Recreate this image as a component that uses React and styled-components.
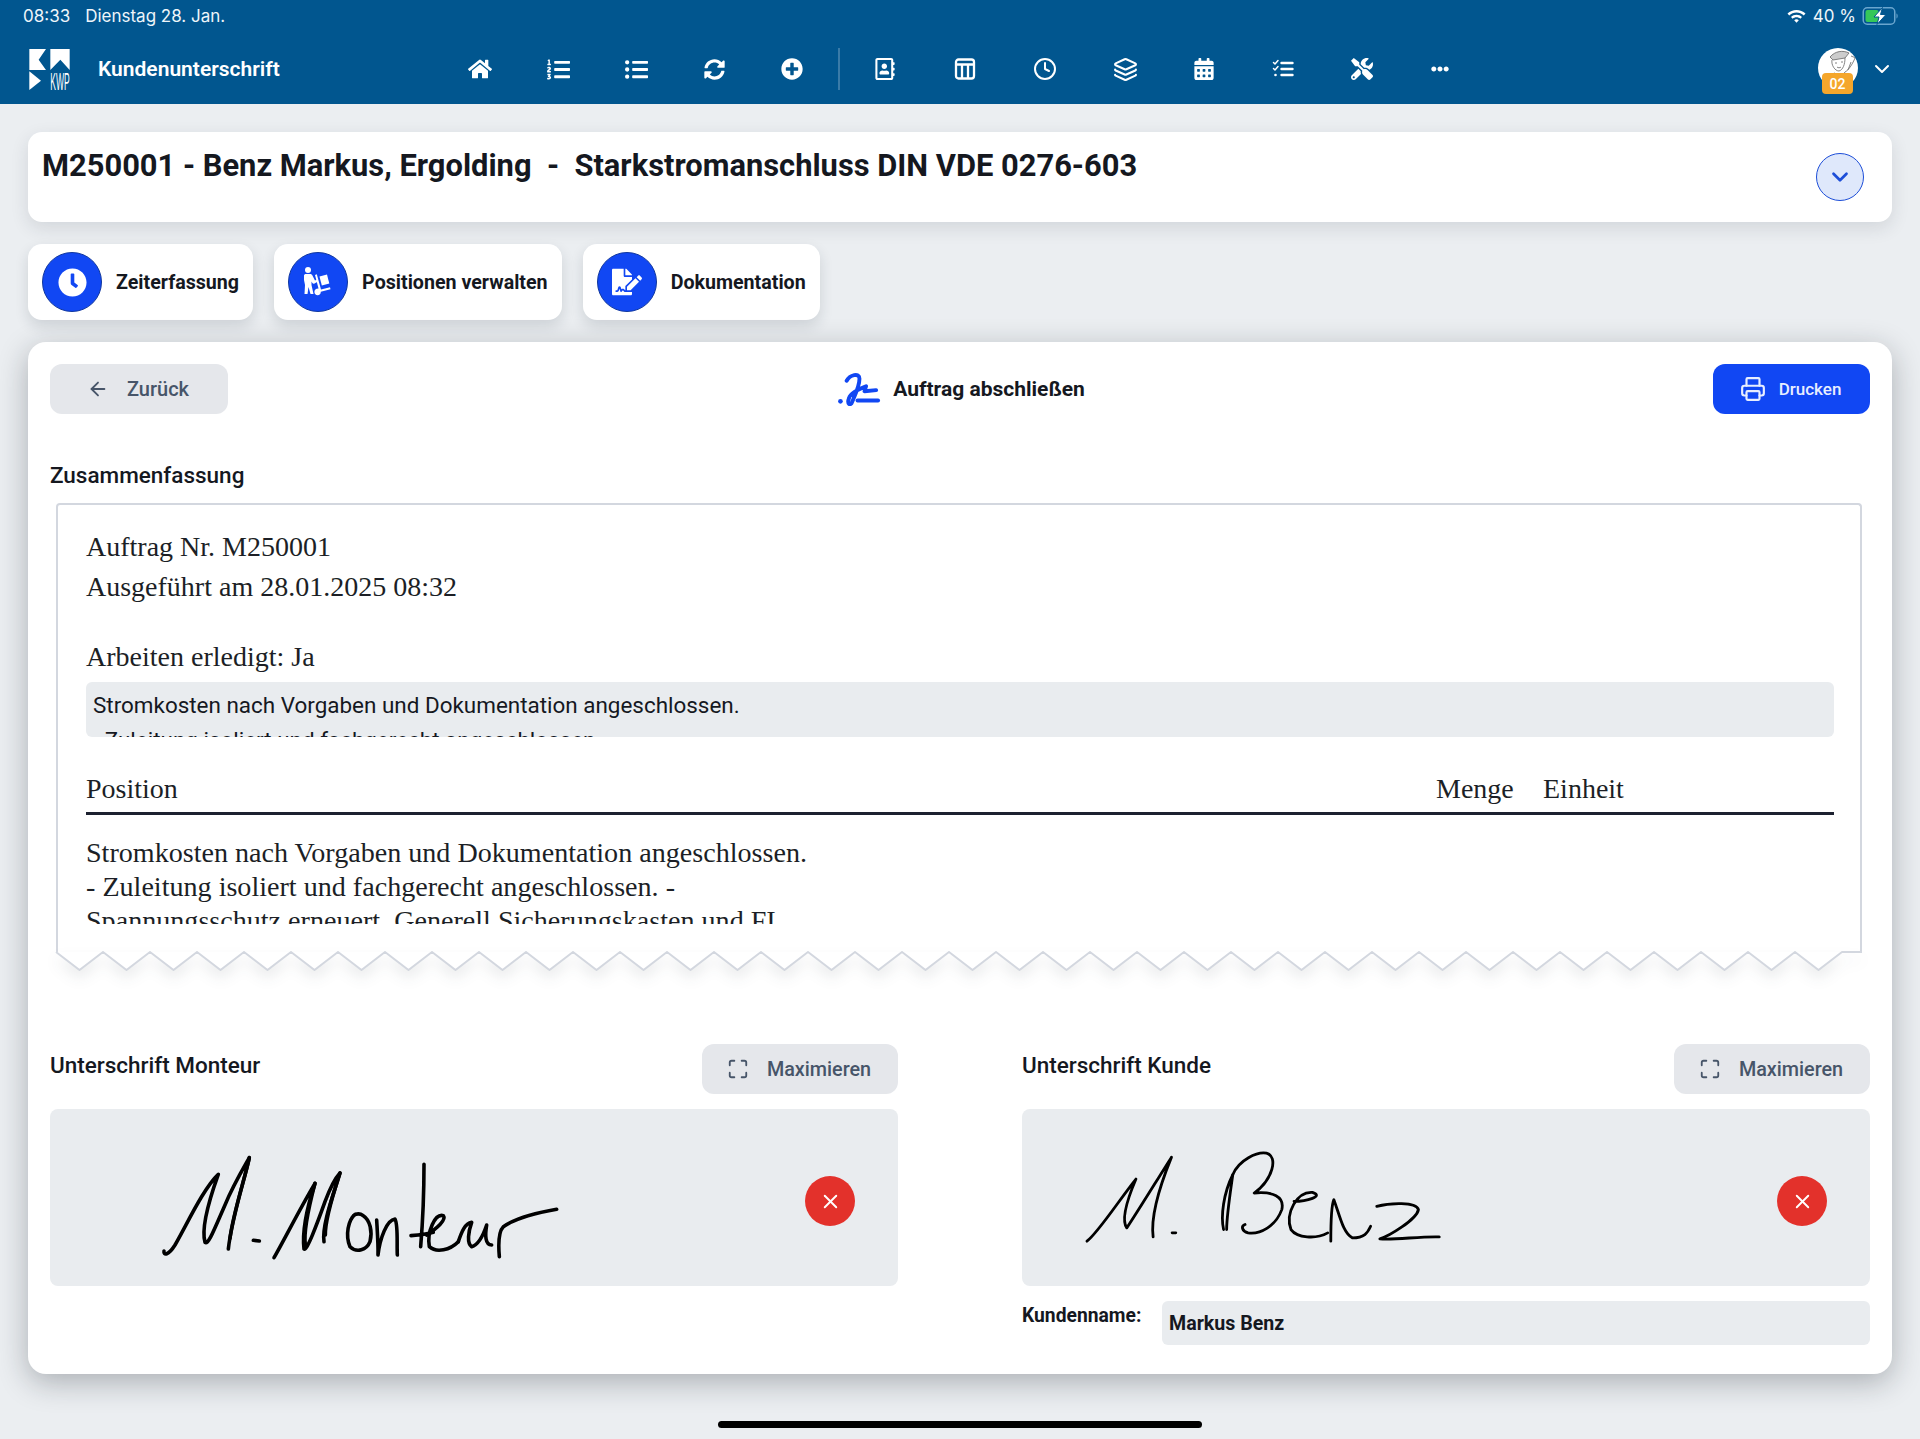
import React from "react";
import styled, { createGlobalStyle } from "styled-components";
import { FaHome, FaListOl, FaListUl, FaSyncAlt, FaPlusCircle, FaRegAddressBook, FaCalendarAlt, FaTools, FaEllipsisH, FaClock, FaFileSignature } from "react-icons/fa";
import { ChevronDown, Clock, Layers, Printer, ArrowLeft, Maximize, X } from "lucide-react";

const Global = createGlobalStyle`
  html, body { margin: 0; padding: 0; background: #ebeef1; }
  body { font-family: Roboto, "Liberation Sans", sans-serif; color: #15181f; }
  * { box-sizing: border-box; }
`;

const Page = styled.div`
  position: relative;
  width: 1920px;
  height: 1439px;
  overflow: hidden;
  background: #ebeef1;
`;

const Header = styled.header`
  height: 104px;
  background: #01568f;
  color: #fff;
  padding: 0 20px 0 23px;
`;

const StatusBar = styled.div`
  height: 32px;
  display: flex;
  align-items: center;
  justify-content: space-between;
  font-family: Inter, Roboto, sans-serif;
  font-size: 17px;
  color: #eef5fa;
`;

const StatusGroup = styled.div`
  display: flex;
  align-items: center;
  gap: ${(p) => p.$gap}px;
`;

const Nav = styled.nav`
  height: 72px;
  display: flex;
  align-items: center;
  padding-right: 6px;
`;

const LogoBox = styled.div`
  width: 75px;
  display: flex;
  padding: 0 0 0 6px;
  margin-top: 2px;
`;

const NavTitle = styled.div`
  width: 343px;
  font-size: 21px;
  font-weight: 600;
  margin-top: 1px;
`;

const NavSlot = styled.div`
  width: ${(p) => p.$w}px;
  display: flex;
  justify-content: center;
  align-items: center;
  margin-top: 2px;
  color: #fff;
`;

const NavDivider = styled.div`
  width: 2px;
  height: 42px;
  margin: 2px 5px 0 7px;
  background: #3a7ba8;
`;

const UserArea = styled.div`
  margin-left: auto;
  display: flex;
  align-items: center;
  gap: 12px;
  margin-top: 2px;
`;

const AvatarWrap = styled.div`
  position: relative;
  width: 40px;
  height: 40px;
  margin-top: -2px;
`;

const Avatar = styled.div`
  width: 40px;
  height: 40px;
  border-radius: 50%;
  background: #fff;
  overflow: hidden;
`;

const Badge = styled.div`
  position: absolute;
  left: 4px;
  top: 25px;
  width: 31px;
  height: 21px;
  border-radius: 4px;
  background: #f5a62b;
  color: #fff;
  font-size: 14px;
  font-weight: 500;
  display: flex;
  align-items: center;
  justify-content: center;
`;

const Content = styled.main`
  padding: 28px 28px 0;
  display: flex;
  flex-direction: column;
  gap: 22px;
`;

const TitleCard = styled.section`
  height: 90px;
  background: #fff;
  border-radius: 14px;
  padding: 13px 28px 0 14px;
  display: flex;
  justify-content: space-between;
  box-shadow: 0 6px 18px rgba(30, 40, 60, 0.12);
`;

const OrderTitle = styled.h1`
  margin: 0;
  font-size: 30.86px;
  line-height: 42px;
  font-weight: 700;
  white-space: pre;
  color: #15181f;
`;

const ExpandBtn = styled.button`
  width: 48px;
  height: 48px;
  margin-top: 8px;
  padding: 0;
  border-radius: 50%;
  border: 1.5px solid #1d4ed8;
  background: #dfe8fb;
  color: #1d4ed8;
  display: flex;
  align-items: center;
  justify-content: center;
`;

const Tabs = styled.div`
  display: flex;
  gap: 21px;
`;

const Tab = styled.div`
  height: 76px;
  background: #fff;
  border-radius: 14px;
  padding: 0 14px;
  display: flex;
  align-items: center;
  gap: 14px;
  font-size: 19.65px;
  font-weight: 700;
  box-shadow: 0 6px 14px rgba(30, 40, 60, 0.14);
`;

const TabIcon = styled.div`
  width: 60px;
  height: 60px;
  border-radius: 50%;
  background: #1147f3;
  border: 1px solid #10379f;
  color: #fff;
  display: flex;
  align-items: center;
  justify-content: center;
`;

const MainCard = styled.section`
  height: 1032px;
  background: #fff;
  border-radius: 18px;
  padding: 22px;
  box-shadow: 0 8px 30px rgba(20, 25, 35, 0.3);
`;

const Toolbar = styled.div`
  display: grid;
  grid-template-columns: 1fr auto 1fr;
  align-items: center;
  height: 50px;
`;

const GrayButton = styled.button`
  height: 50px;
  width: ${(p) => p.$w}px;
  padding: 0 2px 0 0;
  border: none;
  border-radius: 12px;
  background: #e5e7eb;
  color: #475569;
  font-family: inherit;
  font-size: ${(p) => p.$size}px;
  font-weight: 500;
  display: flex;
  align-items: center;
  justify-content: center;
  gap: ${(p) => p.$gap}px;
`;

const CenterTitle = styled.div`
  display: flex;
  align-items: center;
  gap: 11px;
  font-size: 21px;
  font-weight: 700;
`;

const PrintButton = styled.button`
  justify-self: end;
  width: 157px;
  height: 50px;
  padding: 0 2px 0 0;
  border: none;
  border-radius: 12px;
  background: #1147f3;
  color: #e8eeff;
  font-family: inherit;
  font-size: 17px;
  font-weight: 500;
  display: flex;
  align-items: center;
  justify-content: center;
  gap: 13px;
`;

const SectionLabel = styled.h2`
  margin: 0;
  font-size: 22.5px;
  line-height: 26px;
  font-weight: 500;
  padding-top: ${(p) => p.$top || 0}px;
`;

const SummaryBlock = styled.div`
  margin-top: 48px;
`;

const Paper = styled.div`
  margin: 15px 8px 0 6px;
  height: 449px;
  border: 2px solid #d3d7df;
  border-bottom: none;
  border-radius: 4px 4px 0 0;
  padding: 22px 26px 0 28px;
  background: #fff;
  font-family: "Liberation Serif", "Times New Roman", serif;
  font-size: 28px;
  color: #1c1f26;
`;

const PaperLine = styled.div`
  line-height: 40px;
  margin-top: ${(p) => p.$top || 0}px;
`;

const Notes = styled.div`
  height: 55px;
  margin-top: 5px;
  overflow: hidden;
  padding: 6px 7px 0;
  border-radius: 6px;
  background: #e9ecef;
  font-family: Roboto, sans-serif;
  font-size: 22.45px;
  line-height: 35px;
  color: #15181f;
`;

const TableHead = styled.div`
  margin-top: 32px;
  display: grid;
  grid-template-columns: 1350px 107px 1fr;
  line-height: 40px;
  padding-bottom: 3px;
  border-bottom: 3px solid #1c2130;
`;

const RowText = styled.div`
  margin-top: 21px;
  height: 88px;
  overflow: hidden;
  font-size: 28.1px;
  line-height: 34px;
`;

const ZigzagSvg = styled.svg`
  display: block;
  margin: 0 8px 0 6px;
  width: calc(100% - 14px);
  height: 20px;
  overflow: visible;
  filter: drop-shadow(0 8px 7px rgba(30, 40, 60, 0.09));
`;

const SignatureGrid = styled.div`
  margin-top: 72px;
  display: grid;
  grid-template-columns: 848px 848px;
  column-gap: 124px;
`;

const SignatureHead = styled.div`
  display: flex;
  justify-content: space-between;
  height: 50px;
`;

const SignatureBox = styled.div`
  position: relative;
  margin-top: 15px;
  height: 177px;
  border-radius: 8px;
  background: #e9ecef;
  overflow: hidden;
`;

const SignatureSvg = styled.svg`
  display: block;
  width: 100%;
  height: 100%;
  path {
    fill: none;
    stroke: #000;
    stroke-linecap: round;
    stroke-linejoin: round;
    vector-effect: non-scaling-stroke;
    stroke-width: ${(p) => p.$sw}px;
  }
`;

const ClearButton = styled.button`
  position: absolute;
  right: 43px;
  top: 67px;
  width: 50px;
  height: 50px;
  padding: 0;
  border: none;
  border-radius: 50%;
  background: #e3312b;
  color: #fff;
  display: flex;
  align-items: center;
  justify-content: center;
`;

const NameRow = styled.div`
  margin-top: 15px;
  display: flex;
`;

const NameLabel = styled.label`
  width: 140px;
  padding-top: 1px;
  font-size: 19.3px;
  line-height: 28px;
  font-weight: 700;
`;

const NameInput = styled.input`
  flex: 1;
  height: 44px;
  border: none;
  border-radius: 6px;
  padding: 0 7px;
  background: #e9ecef;
  font-family: inherit;
  font-size: 19.6px;
  font-weight: 700;
  color: #15181f;
`;

const HomeBar = styled.div`
  position: absolute;
  left: 718px;
  top: 1421px;
  width: 484px;
  height: 7px;
  border-radius: 4px;
  background: #000;
`;

const Logo = () => (
  <svg width="41" height="41" viewBox="0 0 121 123">
    <path fill="#fff" d="M0 0H50L28 32L50 63H0Z" />
    <path fill="#fff" d="M63 0H121V63L93 32L63 63Z" />
    <path fill="#fff" d="M0 67L35 95L0 123Z" />
    <text x="63" y="122" fill="#fff" fontFamily="Liberation Sans, sans-serif" fontSize="74" textLength="58" lengthAdjust="spacingAndGlyphs">KWP</text>
  </svg>
);

const Wifi = () => (
  <svg width="21" height="16" viewBox="0 0 20 16" fill="#fff">
    <path d="M10 2C6.6 2 3.5 3.3 1 5.6l1.7 1.8C4.7 5.6 7.2 4.5 10 4.5s5.3 1.1 7.3 2.9L19 5.600C16.500 3.300 13.400 2 10 2Z" />
    <path d="M10 6.800c-2.100 0-4 .8-5.500 2.200l1.700 1.800c1-1 2.300-1.500 3.800-1.500s2.800.5 3.800 1.500L15.500 9c-1.500-1.400-3.400-2.200-5.500-2.200Z" />
    <path d="M10 11.300c-.9 0-1.700.4-2.300.9L10 14.700l2.300-2.500c-.6-.5-1.400-.9-2.300-.9Z" />
  </svg>
);

const Battery = () => (
  <svg width="38" height="18" viewBox="0 0 37 18">
    <rect x="0.750" y="0.750" width="31.500" height="16.500" rx="4" fill="none" stroke="#6aa6cf" strokeWidth="1.500" />
    <rect x="3" y="3" width="13" height="12" rx="2" fill="#35c75a" />
    <path d="M34 6.500c1.500.5 1.500 4.500 0 5Z" fill="#6aa6cf" />
    <path d="M20 0.500L11.500 10h5l-2 7.500L23.500 7.500h-5.500Z" fill="#fff" stroke="#01568f" strokeWidth="1" />
  </svg>
);

const ColumnsIcon = () => (
  <svg width="24" height="24" viewBox="0 0 24 24" fill="none" stroke="#fff" strokeWidth="2.300" strokeLinejoin="round">
    <rect x="3" y="2.500" width="18" height="19" rx="2.500" />
    <path d="M3 7.500H21M9 7.500V21.500M15 7.500V21.500" />
  </svg>
);

const ChecklistIcon = () => (
  <svg width="24" height="24" viewBox="0 0 24 24" fill="none" stroke="#fff" strokeWidth="2" strokeLinecap="round" strokeLinejoin="round">
    <path d="M2.500 5.500l1.500 1.500 3-3.500M2.500 11.500l1.500 1.500 3-3.500" strokeWidth="1.500" />
    <path d="M10.500 6H21.500M10.500 12H21.500M10.500 18H21.500" strokeWidth="2.400" />
    <circle cx="4.500" cy="18" r="1.300" fill="#fff" stroke="none" />
  </svg>
);

const SignIcon = () => (
  <svg width="47" height="33" viewBox="0 0 105 85" fill="none" stroke="#1147f3" strokeWidth="10" strokeLinecap="round" strokeLinejoin="round">
    <circle cx="6" cy="73" r="6" fill="#1147f3" stroke="none" />
    <path d="M22 20C30 5 55-2 55 15C55 35 42 60 36 75C32 86 22 80 28 65C32 50 55 42 72 34L68 47L98 44" />
    <path d="M50 71H103" />
  </svg>
);

const PersonDolly = () => (
  <svg width="34" height="34" viewBox="0 0 34 34" fill="#fff">
    <circle cx="7" cy="5" r="3" />
    <path d="M3 10.500C3 9.500 4 9 5 9H9C10 9 10.800 9.500 11.300 10.300L14 15.500L16 14.500L17 16.500L13.500 18.500C12.700 19 11.800 18.700 11.400 18L10.500 16.500V20L12.500 29H9.500L7.500 22L6.500 29H3.500L4 20L3 15Z" />
    <path d="M14 10L15.800 9.200L20 24.500L29 22.300L29.500 24.200L19.800 26.700C19.900 28.700 18.500 30.200 16.700 30.200C14.800 30.200 13.400 28.700 13.400 26.900C13.400 25.500 14.300 24.300 15.600 23.800L17.500 23.500Z" />
    <path d="M18.500 11.500L26 9.500L28.300 18.500L20.800 20.500Z" />
  </svg>
);

const AvatarDrawing = () => (
  <svg width="40" height="40" viewBox="0 0 40 40" fill="none" stroke="#666" strokeWidth="0.800">
    <path d="M12 9C17 3 25 2 31 5L27 10L15 12Z" fill="#ccc" />
    <path d="M14 12C13 17 17 23 21 23C25 22 27 16 27 10" />
    <path d="M17 15h2M23 14h2M19 19c1 1 3 1 4 0" />
    <path d="M6 36C8 30 13 26 17 25L21 31L27 24C31 22 35 15 37 10" />
    <path d="M33 8l5 2M14 26l-3 10M24 27l2 9M30 22l3-8" />
  </svg>
);

const monteurPaths = [
  "M42 318C40 332 55 332 75 300C110 240 160 130 205 88C190 130 150 240 165 292C175 300 190 260 225 180C250 120 280 70 298 38C285 100 245 220 235 312",
  "M298 38C285 100 250 200 240 280",
  "M310 286L328 288",
  "M372 338C400 290 450 190 495 115C480 160 455 250 462 312C470 320 500 240 525 170C540 130 555 100 570 84C550 150 515 240 522 290",
  "M495 115C478 180 460 260 466 300M570 84C552 140 525 220 526 270",
  "M615 208C595 225 585 270 600 305C620 325 650 315 660 290C668 260 660 225 640 212C630 205 620 205 610 212",
  "M680 225C682 260 685 300 684 330C690 280 710 225 735 222C745 240 740 300 742 330",
  "M822 58C822 120 820 210 812 305M783 272C810 270 830 268 850 262",
  "M830 270C860 250 890 225 880 212C855 205 830 260 838 305C860 325 900 315 925 290",
  "M925 290C935 260 945 235 965 232C955 260 950 295 965 305C985 300 1000 270 1010 240C1005 270 1005 300 1025 300",
  "M1048 335C1045 300 1045 260 1060 245C1090 225 1150 205 1220 193",
];

const benzPaths = [
  "M207 665C225 640 260 540 287 478C275 530 262 600 272 625C285 590 325 470 345 412C330 480 310 580 315 652",
  "M346 640L352 640",
  "M430 630C425 590 430 520 445 465C440 530 435 590 435 630",
  "M445 465C455 420 485 395 500 400C520 410 510 480 480 520C510 515 530 530 525 570C515 620 490 645 470 640C460 635 458 620 465 615",
  "M545 545C565 545 595 530 575 518C550 515 530 580 540 630C550 655 580 660 600 640",
  "M605 665C605 620 605 560 610 540C620 590 625 640 640 655C660 655 665 640 670 620",
  "M680 560C700 550 745 545 748 570C745 600 700 650 685 658C710 662 750 650 782 652",
];

const zigzag = (() => {
  const period = 47;
  const width = 1806;
  let d = "M0 0";
  for (let x = period / 2, low = true; x < width; x += period / 2, low = !low) {
    d += `L${x} ${low ? 18 : 0}`;
  }
  return d + `L${width} 0`;
})();

const navGroupA = [
  [FaHome, 24],
  [FaListOl, 23],
  [FaListUl, 23],
  [FaSyncAlt, 21],
  [FaPlusCircle, 22],
];

const Signature = ({ paths, viewBox, sw }) => (
  <SignatureSvg viewBox={viewBox} preserveAspectRatio="none" $sw={sw}>
    {paths.map((d) => (
      <path key={d} d={d} />
    ))}
  </SignatureSvg>
);

export default function App() {
  return (
    <Page>
      <Global />
      <Header>
        <StatusBar>
          <StatusGroup $gap={15}>
            <span>08:33</span>
            <span>Dienstag 28. Jan.</span>
          </StatusGroup>
          <StatusGroup $gap={6}>
            <Wifi />
            <span>40 %</span>
            <Battery />
          </StatusGroup>
        </StatusBar>
        <Nav>
          <LogoBox>
            <Logo />
          </LogoBox>
          <NavTitle>Kundenunterschrift</NavTitle>
          {navGroupA.map(([Icon, size], i) => (
            <NavSlot key={i} $w={78}>
              <Icon size={size} />
            </NavSlot>
          ))}
          <NavDivider />
          <NavSlot $w={80}><FaRegAddressBook size={22} /></NavSlot>
          <NavSlot $w={80}><ColumnsIcon /></NavSlot>
          <NavSlot $w={80}><Clock size={24} strokeWidth={2} /></NavSlot>
          <NavSlot $w={80}><Layers size={25} strokeWidth={2} /></NavSlot>
          <NavSlot $w={78}><FaCalendarAlt size={22} /></NavSlot>
          <NavSlot $w={80}><ChecklistIcon /></NavSlot>
          <NavSlot $w={78}><FaTools size={22} /></NavSlot>
          <NavSlot $w={78}><FaEllipsisH size={18} /></NavSlot>
          <UserArea>
            <AvatarWrap>
              <Avatar><AvatarDrawing /></Avatar>
              <Badge>02</Badge>
            </AvatarWrap>
            <ChevronDown size={24} strokeWidth={2} />
          </UserArea>
        </Nav>
      </Header>
      <Content>
        <TitleCard>
          <OrderTitle>{"M250001 - Benz Markus, Ergolding  -  Starkstromanschluss DIN VDE 0276-603"}</OrderTitle>
          <ExpandBtn aria-label="Details"><ChevronDown size={26} strokeWidth={2.500} /></ExpandBtn>
        </TitleCard>
        <Tabs>
          <Tab><TabIcon><FaClock size={29} /></TabIcon>Zeiterfassung</Tab>
          <Tab><TabIcon><PersonDolly /></TabIcon>Positionen verwalten</Tab>
          <Tab><TabIcon><FaFileSignature size={30} /></TabIcon>Dokumentation</Tab>
        </Tabs>
        <MainCard>
          <Toolbar>
            <GrayButton $w={178} $gap={18} $size={20}><ArrowLeft size={22} />Zurück</GrayButton>
            <CenterTitle><SignIcon />Auftrag abschließen</CenterTitle>
            <PrintButton><Printer size={26} />Drucken</PrintButton>
          </Toolbar>
          <SummaryBlock>
            <SectionLabel>Zusammenfassung</SectionLabel>
            <Paper>
              <PaperLine>Auftrag Nr. M250001</PaperLine>
              <PaperLine>Ausgeführt am 28.01.2025 08:32</PaperLine>
              <PaperLine $top={30}>Arbeiten erledigt: Ja</PaperLine>
              <Notes>
                <div>Stromkosten nach Vorgaben und Dokumentation angeschlossen.</div>
                <div>- Zuleitung isoliert und fachgerecht angeschlossen.</div>
              </Notes>
              <TableHead>
                <span>Position</span>
                <span>Menge</span>
                <span>Einheit</span>
              </TableHead>
              <RowText>
                Stromkosten nach Vorgaben und Dokumentation angeschlossen.
                <br />- Zuleitung isoliert und fachgerecht angeschlossen. -
                <br />Spannungsschutz erneuert. Generell Sicherungskasten und FI
              </RowText>
            </Paper>
            <ZigzagSvg viewBox="0 0 1806 20" preserveAspectRatio="none">
              <path d={zigzag} fill="#fff" stroke="#d3d7df" strokeWidth="2" strokeLinejoin="round" />
            </ZigzagSvg>
          </SummaryBlock>
          <SignatureGrid>
            <div>
              <SignatureHead>
                <SectionLabel $top={8}>Unterschrift Monteur</SectionLabel>
                <GrayButton $w={196} $gap={18} $size={19.8}><Maximize size={22} />Maximieren</GrayButton>
              </SignatureHead>
              <SignatureBox>
                <Signature paths={monteurPaths} viewBox="-300 -108 2544 531" sw={3.600} />
                <ClearButton aria-label="Löschen"><X size={23} strokeWidth={2} /></ClearButton>
              </SignatureBox>
            </div>
            <div>
              <SignatureHead>
                <SectionLabel $top={8}>Unterschrift Kunde</SectionLabel>
                <GrayButton $w={196} $gap={18} $size={19.8}><Maximize size={22} />Maximieren</GrayButton>
              </SignatureHead>
              <SignatureBox>
                <Signature paths={benzPaths} viewBox="101 267 1384 533" sw={2.800} />
                <ClearButton aria-label="Löschen"><X size={23} strokeWidth={2} /></ClearButton>
              </SignatureBox>
              <NameRow>
                <NameLabel>Kundenname:</NameLabel>
                <NameInput readOnly value="Markus Benz" />
              </NameRow>
            </div>
          </SignatureGrid>
        </MainCard>
      </Content>
      <HomeBar />
    </Page>
  );
}
